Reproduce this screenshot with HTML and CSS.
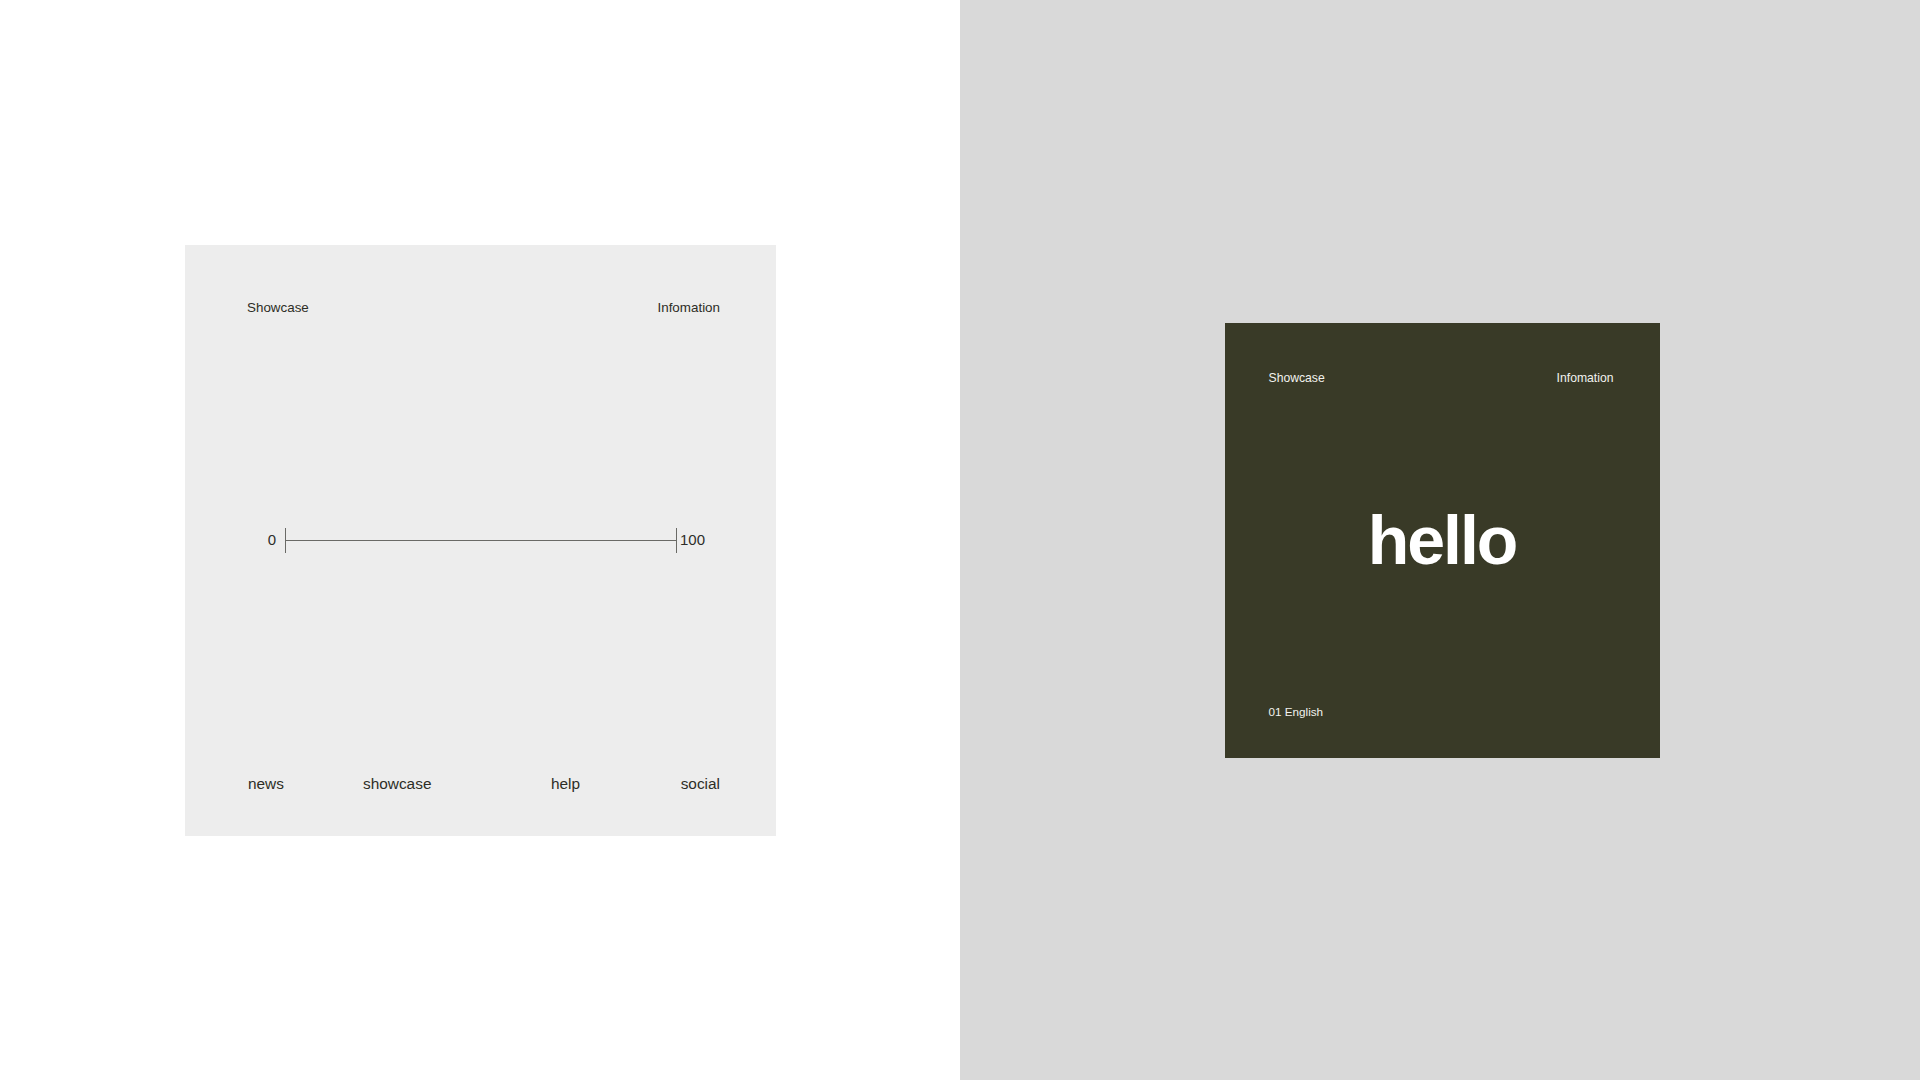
FILE: index.html
```html
<!DOCTYPE html>
<html lang="en">
<head>
<meta charset="utf-8">
<title>Showcase</title>
<link rel="stylesheet" href="styles.css">
</head>
<body>
<main class="page">
  <section class="half half-light">
    <div class="card-light">
      <header class="card-head">
        <span>Showcase</span>
        <span>Infomation</span>
      </header>
      <div class="slider">
        <span class="slider-min">0</span>
        <div class="track"><div class="track-line"></div></div>
        <span class="slider-max">100</span>
      </div>
      <nav class="card-nav">
        <span>news</span>
        <span>showcase</span>
        <span>help</span>
        <span>social</span>
      </nav>
    </div>
  </section>
  <section class="half half-grey">
    <div class="card-dark">
      <header class="dark-head">
        <span>Showcase</span>
        <span>Infomation</span>
      </header>
      <h1 class="hello">hello</h1>
      <footer class="dark-foot">01 English</footer>
    </div>
  </section>
</main>
</body>
</html>
```

FILE: styles.css
```css
html, body {
  margin: 0;
  padding: 0;
}
body {
  font-family: "Liberation Sans", Arial, sans-serif;
  width: 1920px;
  height: 1080px;
  overflow: hidden;
}
.page {
  display: grid;
  grid-template-columns: 960px 960px;
  height: 1080px;
}
.half {
  display: flex;
  align-items: center;
  justify-content: center;
}
.half-light {
  background: #ffffff;
  padding-left: 1px;
}
.half-grey {
  background: #d9d9d9;
  padding-left: 4px;
}

/* light card */
.card-light {
  box-sizing: border-box;
  width: 591px;
  height: 591px;
  background: #ededed;
  padding: 0 56px 0 62px;
  display: grid;
  grid-template-rows: 1fr auto 1fr;
  color: #2d2e26;
}
.card-head {
  align-self: start;
  margin-top: 55px;
  display: flex;
  justify-content: space-between;
  font-size: 13.4px;
  line-height: 16px;
}
.slider {
  margin-left: -62px;
  margin-right: -56px;
  padding-left: 1px;
  display: grid;
  grid-template-columns: 1fr 392px 1fr;
  align-items: center;
  font-size: 15px;
  line-height: 18px;
  color: #2d2d2a;
}
.slider-min {
  justify-self: end;
  margin-right: 9px;
}
.slider-max {
  justify-self: start;
  margin-left: 3px;
}
.track {
  box-sizing: border-box;
  height: 25px;
  border-left: 1px solid #6a6a66;
  border-right: 1px solid #6a6a66;
  display: flex;
  align-items: center;
}
.track-line {
  flex: 1;
  height: 1px;
  background: #6a6a66;
}
.card-nav {
  align-self: end;
  margin-bottom: 42px;
  padding-left: 1px;
  display: grid;
  grid-template-columns: 115px 188px 1fr auto;
  font-size: 15.4px;
  line-height: 20px;
}

/* dark card */
.card-dark {
  box-sizing: border-box;
  width: 435px;
  height: 435px;
  background: #393a27;
  color: #f2f2ee;
  padding: 0 46px 0 44px;
  display: grid;
  grid-template-rows: 1fr auto 1fr;
}
.dark-head {
  align-self: start;
  margin-top: 48px;
  display: flex;
  justify-content: space-between;
  font-size: 12.2px;
  line-height: 14px;
}
.hello {
  margin: 0;
  text-align: center;
  font-size: 68px;
  line-height: 1;
  font-weight: 700;
  letter-spacing: -0.03em;
  color: #ffffff;
  padding-left: 2px;
}
.dark-foot {
  align-self: end;
  margin-bottom: 39px;
  font-size: 11.7px;
  line-height: 14px;
}
```
